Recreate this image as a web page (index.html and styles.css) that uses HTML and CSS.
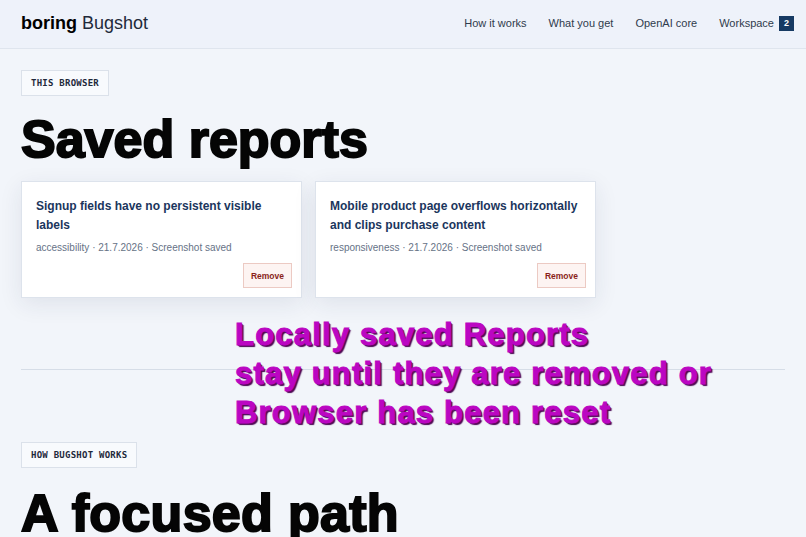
FILE: index.html
```html
<!DOCTYPE html>
<html lang="en">
<head>
    <meta charset="UTF-8">
    <meta name="viewport" content="width=device-width, initial-scale=1.0">
    <title>boring Bugshot</title>
    <link rel="stylesheet" href="styles.css">
</head>
<body>
    <header class="topbar">
        <a class="brand" href="#"><strong>boring</strong> Bugshot</a>
        <nav class="nav">
            <a href="#how">How it works</a>
            <a href="#get">What you get</a>
            <a href="#core">OpenAI core</a>
            <a href="#workspace">Workspace <span class="count">2</span></a>
        </nav>
    </header>

    <main class="page">
        <section class="saved">
            <span class="eyebrow">THIS BROWSER</span>
            <h1 class="title">Saved reports</h1>
            <div class="reports">
                <article class="report">
                    <h3>Signup fields have no persistent visible labels</h3>
                    <p class="meta">accessibility · 21.7.2026 · Screenshot saved</p>
                    <div class="actions"><button class="remove">Remove</button></div>
                </article>
                <article class="report">
                    <h3>Mobile product page overflows horizontally and clips purchase content</h3>
                    <p class="meta">responsiveness · 21.7.2026 · Screenshot saved</p>
                    <div class="actions"><button class="remove">Remove</button></div>
                </article>
            </div>
        </section>

        <hr class="divider">

        <section class="how" id="how">
            <span class="eyebrow">HOW BUGSHOT WORKS</span>
            <h1 class="title">A focused path</h1>
        </section>

        <!-- note pinned over the list -->
        <p class="note">Locally saved Reports<br>stay until they are removed or<br>Browser has been reset</p>
    </main>
</body>
</html>
```

FILE: styles.css
```css
/* Base */
* {
    margin: 0;
    padding: 0;
    box-sizing: border-box;
}
body {
    background: #f2f5fa;
    font-family: 'Liberation Sans', Arial, sans-serif;
    color: #0a0a0a;
    overflow: hidden;
}
a {
    color: inherit;
    text-decoration: none;
}

/* Top bar */
.topbar {
    height: 49px;
    display: flex;
    align-items: center;
    justify-content: space-between;
    padding: 0 12px 0 21px;
    background: #eef2fa;
    border-bottom: 1px solid #dfe5ee;
}
.brand {
    font-size: 18px;
    color: #1f2a3a;
    margin-top: -2px;
}
.brand strong {
    color: #000;
}
.nav {
    display: flex;
    align-items: center;
    gap: 22px;
    font-size: 11px;
    color: #2f3b4c;
    margin-top: -2px;
}
.nav a {
    display: flex;
    align-items: center;
    gap: 5px;
}
.count {
    width: 15px;
    height: 15px;
    display: inline-flex;
    align-items: center;
    justify-content: center;
    background: #163a63;
    color: #fff;
    font-size: 9px;
    font-weight: bold;
}

/* Page */
.page {
    position: relative;
    padding: 0 21px;
}
.eyebrow {
    display: inline-block;
    height: 26px;
    line-height: 24px;
    padding: 0 9px;
    background: #f8fafd;
    border: 1px solid #dbe1ea;
    font-family: 'DejaVu Sans Mono', monospace;
    font-size: 9px;
    font-weight: bold;
    letter-spacing: 0.25px;
    color: #1e293b;
}
.title {
    font-size: 52px;
    line-height: 52px;
    font-weight: bold;
    color: #050505;
    -webkit-text-stroke: 2px #050505;
    margin-top: 17px;
}
.saved {
    padding-top: 21px;
}

/* Report cards */
.reports {
    display: flex;
    gap: 13px;
    margin-top: 16px;
}
.report {
    width: 281px;
    padding: 15px 9px 9px 14px;
    background: #fff;
    border: 1px solid #dde3ec;
    box-shadow: 0 6px 22px rgba(30, 45, 75, 0.09);
}
.report h3 {
    font-size: 12px;
    line-height: 19px;
    color: #1b365d;
    padding-right: 5px;
}
.meta {
    margin-top: 6px;
    font-size: 10px;
    line-height: 14px;
    color: #667286;
}
.actions {
    display: flex;
    justify-content: flex-end;
    margin-top: 8px;
}
.remove {
    height: 25px;
    padding: 0 7px;
    background: #fdf4f2;
    border: 1px solid #eccac3;
    color: #8a1f1a;
    font-family: 'Liberation Sans', Arial, sans-serif;
    font-size: 8.5px;
    font-weight: bold;
    cursor: pointer;
}

/* Divider */
.divider {
    border: none;
    border-top: 1px solid #d6dde7;
    margin-top: 71px;
}
.how {
    padding-top: 72px;
}
.how .title {
    margin-top: 19px;
    letter-spacing: 0.3px;
}

/* Pinned note */
.note {
    position: absolute;
    left: 235px;
    top: 266px;
    font-size: 31px;
    line-height: 39px;
    font-weight: bold;
    letter-spacing: 1.2px;
    color: #bb06c2;
    -webkit-text-stroke: 1px #bb06c2;
    text-shadow: 1px 1px 0 #5e0a66, 2px 2px 1px #4a0552;
}
```
